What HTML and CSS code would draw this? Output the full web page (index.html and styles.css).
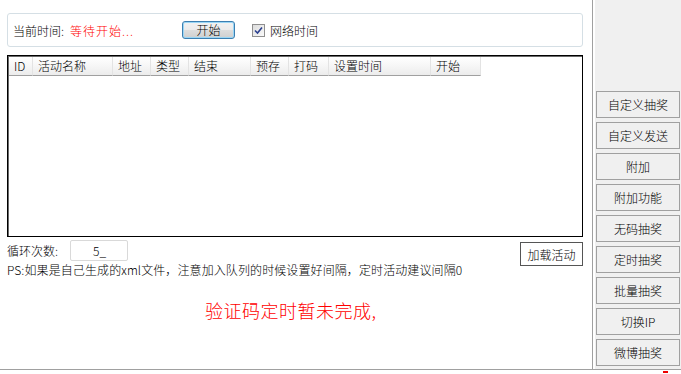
FILE: index.html
```html
<!DOCTYPE html>
<html lang="zh-CN">
<head>
  <meta charset="UTF-8" />
  <title>抽奖助手</title>
  <link rel="stylesheet" href="styles.css">
</head>
<body>
  <div class="window">
    <div class="main">
      <div class="group">
        <span class="label">当前时间:</span>
        <span class="status">等待开始...</span>
        <button class="start-btn">开始</button>
        <label class="check">
          <span class="box">
            <svg width="9" height="9" viewBox="0 0 9 9"><path d="M1 4.5 L3.5 7 L8 1.5" fill="none" stroke="#2a3f8f" stroke-width="1.6"/></svg>
          </span>
          网络时间
        </label>
      </div>

      <div class="list">
        <div class="list-head">
          <div class="col c-id">ID</div>
          <div class="col c-name">活动名称</div>
          <div class="col c-addr">地址</div>
          <div class="col c-type">类型</div>
          <div class="col c-end">结束</div>
          <div class="col c-pre">预存</div>
          <div class="col c-code">打码</div>
          <div class="col c-time">设置时间</div>
          <div class="col c-start">开始</div>
        </div>
      </div>

      <div class="loop-row">
        <span class="label loop-label">循环次数:</span>
        <div class="loop-input">5_</div>
        <button class="load-btn">加载活动</button>
      </div>
      <div class="ps">PS:如果是自己生成的xml文件，注意加入队列的时候设置好间隔，定时活动建议间隔0</div>
      <div class="notice">验证码定时暂未完成,</div>
    </div>

    <div class="side">
      <button class="side-btn">自定义抽奖</button>
      <button class="side-btn">自定义发送</button>
      <button class="side-btn">附加</button>
      <button class="side-btn">附加功能</button>
      <button class="side-btn">无码抽奖</button>
      <button class="side-btn">定时抽奖</button>
      <button class="side-btn">批量抽奖</button>
      <button class="side-btn">切换IP</button>
      <button class="side-btn">微博抽奖</button>
    </div>
  </div>
  <div class="bottom"><span class="mark"></span></div>
</body>
</html>
```

FILE: styles.css
```css
body {
  margin: 0;
  background: #fff;
  font-family: "Noto Sans CJK SC", "Liberation Sans", sans-serif;
  font-size: 12px;
  font-weight: 300;
  color: #000;
}
button {
  font-weight: 300;
}
.window {
  display: flex;
  height: 369px;
  border-bottom: 1px solid #a0a0a0;
}
.main {
  width: 593px;
  box-sizing: border-box;
  border-right: 1px solid #a0a0a0;
  padding: 13px 9px 0 7px;
}
.group {
  height: 34px;
  box-sizing: border-box;
  border: 1px solid #d5dfe5;
  border-radius: 3px;
  display: flex;
  align-items: center;
  padding-left: 5px;
}
.label {
  display: inline-block;
  width: 57px;
  font-size: 12px;
}
.status {
  display: inline-block;
  width: 112px;
  color: #f00;
  letter-spacing: 1px;
}
.start-btn {
  width: 53px;
  height: 18px;
  padding: 0;
  font-family: inherit;
  font-size: 12px;
  line-height: 14px;
  border: 1px solid #3c7fb1;
  border-radius: 3px;
  background: linear-gradient(#f2f2f2, #ebebeb 50%, #dddddd 51%, #cfcfcf);
  box-shadow: inset 0 0 0 1px #9ad6f5;
}
.check {
  display: flex;
  align-items: center;
  margin-left: 17px;
  gap: 5px;
}
.box {
  width: 11px;
  height: 11px;
  border: 1px solid #8f8f8f;
  background: linear-gradient(135deg, #dcdcdc, #fafafa);
  display: flex;
  align-items: center;
  justify-content: center;
}
.list {
  margin-top: 8px;
  height: 182px;
  box-sizing: border-box;
  border: 1px solid #000;
  padding: 1px 0 0 1px;
  box-shadow: inset 1px 1px 0 #6a6a6a;
}
.list-head {
  display: flex;
  height: 19px;
}
.col {
  box-sizing: border-box;
  height: 19px;
  line-height: 18px;
  padding-left: 5px;
  border-right: 1px solid #e3e3e3;
  border-bottom: 1px solid #a0a0a0;
  background: linear-gradient(#ffffff, #f6f6f6 50%, #ececec);
  white-space: nowrap;
}
.c-id { width: 24px; }
.c-name { width: 80px; }
.c-addr { width: 38px; }
.c-type { width: 38px; }
.c-end { width: 62px; }
.c-pre { width: 38px; }
.c-code { width: 40px; }
.c-time { width: 102px; }
.c-start { width: 50px; }
.loop-row {
  display: flex;
  align-items: flex-start;
  margin-top: 3px;
  height: 26px;
}
.loop-label {
  width: 63px;
  margin-top: 2px;
}
.loop-input {
  width: 58px;
  height: 21px;
  box-sizing: border-box;
  border: 1px solid #d9d9d9;
  border-radius: 2px;
  padding-left: 22px;
  line-height: 19px;
}
.load-btn {
  margin-left: auto;
  margin-top: 2px;
  width: 63px;
  height: 24px;
  padding: 0;
  font-family: inherit;
  font-size: 12px;
  background: #fff;
  border: 1px solid #555;
}
.ps {
  margin-top: -3px;
  font-size: 12px;
  line-height: 14px;
  letter-spacing: 0.1px;
  white-space: nowrap;
}
.notice {
  margin-top: 22px;
  margin-left: 198px;
  color: #f00;
  font-size: 18px;
  line-height: 22px;
  letter-spacing: 0.5px;
}
.side {
  flex: 1;
  margin-left: 2px;
  background: #f0f0f0;
  padding: 91px 1px 0 1px;
  display: flex;
  flex-direction: column;
  gap: 4px;
}
.side-btn {
  height: 27px;
  padding: 0;
  font-family: inherit;
  font-size: 12px;
  background: #f0f0f0;
  border: 1px solid #a0a0a0;
  color: #000;
}
.bottom {
  height: 4px;
  position: relative;
}
.mark {
  position: absolute;
  left: 663px;
  top: 1px;
  width: 5px;
  height: 2px;
  background: #e00;
}
```
